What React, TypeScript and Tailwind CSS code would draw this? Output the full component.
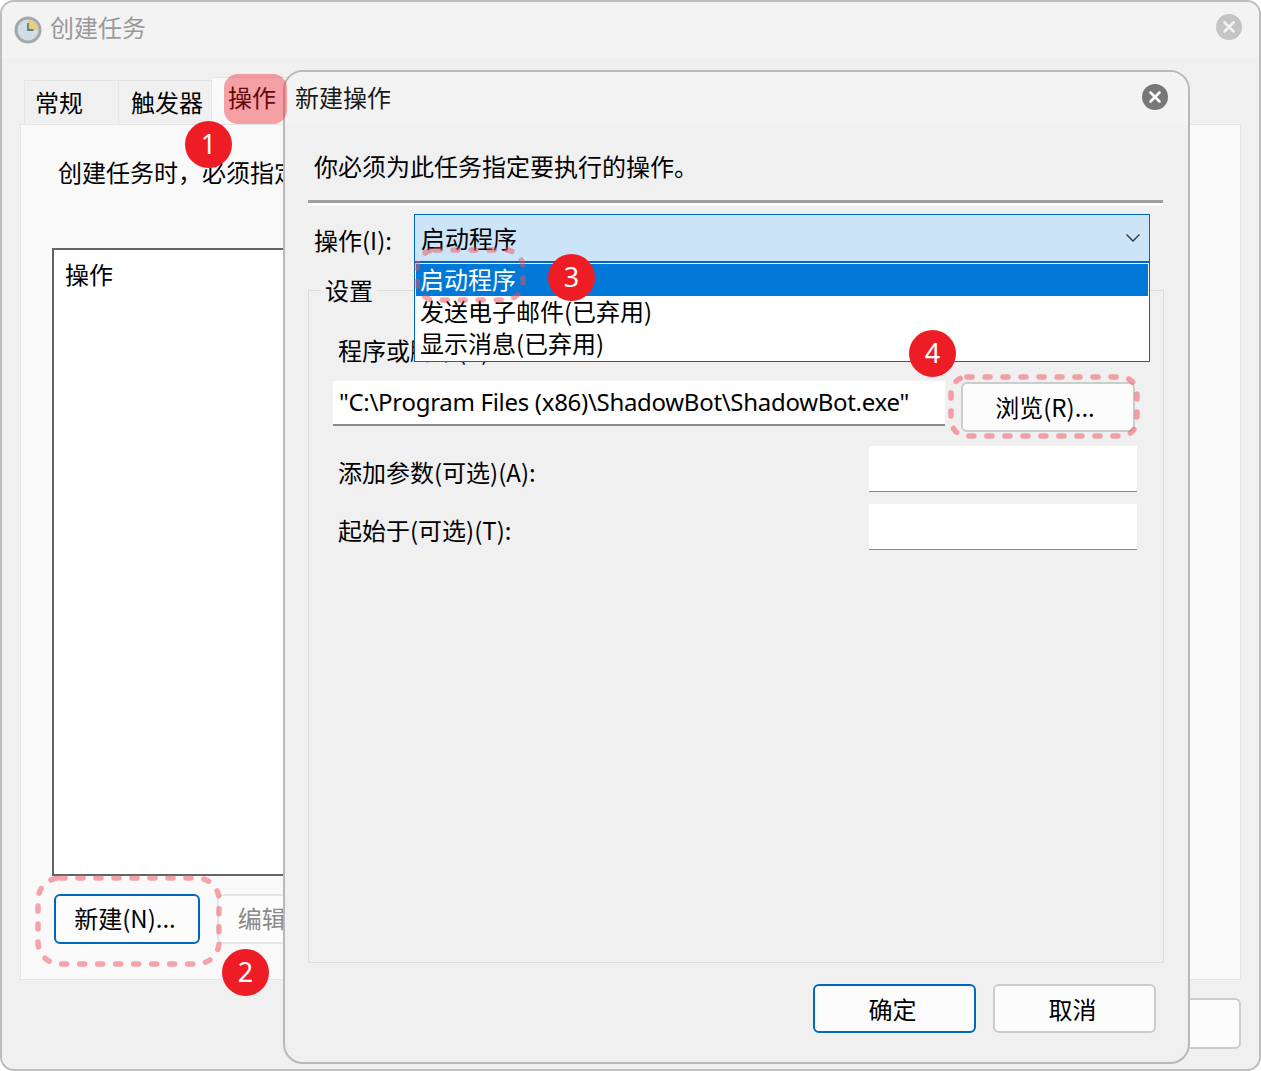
const Badge = ({ n, className }: { n: number; className: string }) => (
  <div
    className={`absolute z-20 flex h-[47px] w-[47px] items-center justify-center rounded-full bg-[#ee1c25] pb-[2px] font-['Noto_Sans','Liberation_Sans',sans-serif] text-[27px] leading-none text-white ${className}`}
  >
    {n}
  </div>
);

const DashedBox = ({ w, h, r, className }: { w: number; h: number; r: number; className: string }) => (
  <svg className={`absolute z-20 ${className}`} width={w} height={h} viewBox={`0 0 ${w} ${h}`} fill="none">
    <rect
      x="3"
      y="3"
      width={w - 6}
      height={h - 6}
      rx={r}
      stroke="#f0505a"
      strokeOpacity="0.5"
      strokeWidth="5.5"
      strokeLinecap="round"
      strokeDasharray="5 13"
    />
  </svg>
);

const CloseDot = ({ dim }: { dim?: boolean }) => (
  <svg className="mt-[3px]" width="26" height="26" viewBox="0 0 26 26">
    <circle cx="13" cy="13" r="13" fill={dim ? '#c4c4c4' : '#777777'} />
    <path d="M8.5 8.5l9 9M17.5 8.5l-9 9" stroke={dim ? '#f3f3f3' : '#ffffff'} strokeWidth="2.6" strokeLinecap="round" />
  </svg>
);

const ClockIcon = () => (
  <svg className="mt-[5px]" width="28" height="28" viewBox="0 0 28 28">
    <circle cx="14" cy="14" r="13.5" fill="#a3a9ab" />
    <circle cx="14" cy="14" r="10.5" fill="#cfdde4" />
    <path d="M14 14V3.5A10.5 10.5 0 0 1 24.5 14z" fill="#e6cf85" />
    <path d="M14 7v7h5.5" stroke="#6f787b" strokeWidth="1.8" fill="none" />
  </svg>
);

const Btn = ({ label, primary, className }: { label: string; primary?: boolean; className: string }) => (
  <button
    className={`flex items-center justify-center rounded-[6px] border-2 bg-[#fcfcfc] text-[24px] leading-none text-black ${
      primary ? 'border-[#0067c0]' : 'border-[#cccccc]'
    } ${className}`}
  >
    {label}
  </button>
);

const FieldRow = ({ label, className }: { label: string; className: string }) => (
  <div className={`flex items-start justify-between pl-[29px] pr-[26px] ${className}`}>
    <span className="mt-[10px] text-[24px] leading-[32px]">{label}</span>
    <div className="h-[46px] w-[268px] border-b border-[#8a8a8a] bg-white" />
  </div>
);

function NewActionDialog() {
  return (
    <div className="absolute left-[283px] top-[70px] flex h-[994px] w-[907px] flex-col rounded-[20px] border-2 border-[#b9b9b9] bg-[#f0f0f0]">
      <div className="flex h-[53px] items-start justify-between rounded-t-[18px] bg-[#f3f3f3] pl-[10px] pr-[20px] pt-[9px]">
        <span className="text-[24px] leading-[32px] text-[#1a1a1a]">新建操作</span>
        <CloseDot />
      </div>

      <p className="ml-[29px] mt-[25px] text-[24px] leading-[32px]">你必须为此任务指定要执行的操作。</p>
      <div className="ml-[23px] mt-[18px] h-[6px] w-[855px] border-t-[3px] border-[#a0a0a0] bg-white" />

      <div className="ml-[29px] mt-[8px] flex h-[48px]">
        <span className="mt-[10px] w-[100px] text-[24px] leading-[32px]">操作(I):</span>
        <div className="relative flex w-[736px] items-center justify-between border border-[#0067c0] bg-[#cce4f7] pl-[6px] pr-[8px]">
          <span className="text-[24px] leading-[32px]">启动程序</span>
          <svg width="16" height="10" viewBox="0 0 16 10" fill="none">
            <path d="M1.5 1.5L8 8l6.5-6.5" stroke="#333333" strokeWidth="1.3" />
          </svg>
          <div className="absolute left-[-1px] right-[-1px] top-[47px] z-10 h-[100px] border border-[#0067c0] bg-white p-px text-[24px] leading-[30px]">
            <div className="h-[32px] bg-[#0078d7] pl-[4px] text-white">启动程序</div>
            <div className="h-[32px] pl-[4px]">发送电子邮件(已弃用)</div>
            <div className="h-[32px] pl-[4px]">显示消息(已弃用)</div>
          </div>
        </div>
      </div>

      <div className="relative ml-[23px] mt-[28px] h-[673px] w-[856px] border border-[#dcdcdc] pt-[43px]">
        <span className="absolute left-[12px] top-[-17px] bg-[#f0f0f0] px-[4px] text-[24px] leading-[32px]">设置</span>
        <div className="pl-[29px] text-[24px] leading-[32px]">程序或脚本(P):</div>
        <div className="ml-[24px] mt-[15px] flex items-start gap-[16px]">
          <div className="h-[45px] w-[612px] border-b-2 border-[#8a8a8a] bg-white pl-[6px] font-['Noto_Sans','Liberation_Sans',sans-serif] text-[24px] leading-[42px] tracking-[-0.3px]">
            "C:\Program Files (x86)\ShadowBot\ShadowBot.exe"
          </div>
          <Btn label="浏览(R)..." className="mt-px h-[50px] w-[174px] pr-[6px]" />
        </div>
        <FieldRow label="添加参数(可选)(A):" className="mt-[14px]" />
        <FieldRow label="起始于(可选)(T):" className="mt-[12px]" />
      </div>

      <div className="mt-[21px] flex justify-end gap-[17px] pr-[32px]">
        <Btn label="确定" primary className="h-[49px] w-[163px] pr-[4px]" />
        <Btn label="取消" className="h-[49px] w-[163px] pr-[4px]" />
      </div>
    </div>
  );
}

export default function App() {
  return (
    <div className="relative h-[1071px] w-[1261px] overflow-hidden bg-white font-['Noto_Sans_CJK_SC','Noto_Sans',sans-serif] text-black">
      {/* parent window, greyed out behind the dialog */}
      <div className="flex h-full flex-col rounded-[14px] border-2 border-[#bdbdbd] bg-[#f0f0f0]">
        <div className="flex h-[56px] items-start justify-between rounded-t-[12px] bg-[#f3f3f3] pl-[12px] pr-[17px] pt-[9px]">
          <div className="flex items-start gap-[8px]">
            <ClockIcon />
            <span className="text-[24px] leading-[32px] text-[#999999]">创建任务</span>
          </div>
          <CloseDot dim />
        </div>

        <div className="ml-[22px] mt-[19px] flex h-[47px] items-end">
          <div className="flex h-[44px] w-[95px] items-center border border-b-0 border-[#e5e5e5] bg-[#f0f0f0] pb-[2px] pl-[10px] text-[24px] leading-none">常规</div>
          <div className="flex h-[44px] w-[93px] items-center border-r border-t border-[#e5e5e5] bg-[#f0f0f0] pb-[2px] pl-[12px] text-[24px] leading-none">触发器</div>
          <div className="flex h-[47px] w-[80px] items-center border-r border-t border-[#e5e5e5] bg-[#f9f9f9] pb-[8px] pl-[16px] text-[24px] leading-none">操作</div>
        </div>

        <div className="ml-[18px] h-[856px] w-[1221px] border border-[#e5e5e5] bg-[#f9f9f9] pl-[31px]">
          <p className="ml-[6px] mt-[31px] text-[24px] leading-[32px]">创建任务时，必须指定任务启动时发生的操作。</p>
          <div className="mt-[60px] h-[628px] w-[1100px] border-2 border-[#646464] bg-white pl-[11px] pt-[8px] text-[24px] leading-[32px]">操作</div>
          <div className="ml-[2px] mt-[18px] flex gap-[17px]">
            <Btn label="新建(N)..." primary className="h-[50px] w-[146px] pb-[2px] pr-[4px]" />
            <Btn label="编辑(E)..." className="h-[50px] w-[146px] !border-[#e5e5e5] pb-[2px] pr-[6px] !text-[#8a8a8a]" />
          </div>
        </div>

        <div className="mr-[18px] mt-[18px] flex justify-end">
          <div className="h-[51px] w-[146px] rounded-[6px] border-2 border-[#cccccc] bg-[#fcfcfc]" />
        </div>
      </div>

      <NewActionDialog />

      {/* callouts drawn over the windows */}
      <div className="absolute left-[224px] top-[74px] z-20 h-[50px] w-[63px] rounded-[14px] bg-[#ee1c25]/40" />
      <DashedBox w={187} h={92} r={22} className="left-[35px] top-[875px]" />
      <DashedBox w={112} h={56} r={18} className="left-[414px] top-[247px]" />
      <DashedBox w={192} h={65} r={16} className="left-[948px] top-[374px]" />
      <Badge n={1} className="left-[185px] top-[121px]" />
      <Badge n={2} className="left-[222px] top-[949px]" />
      <Badge n={3} className="left-[548px] top-[254px]" />
      <Badge n={4} className="left-[909px] top-[330px]" />
    </div>
  );
}
